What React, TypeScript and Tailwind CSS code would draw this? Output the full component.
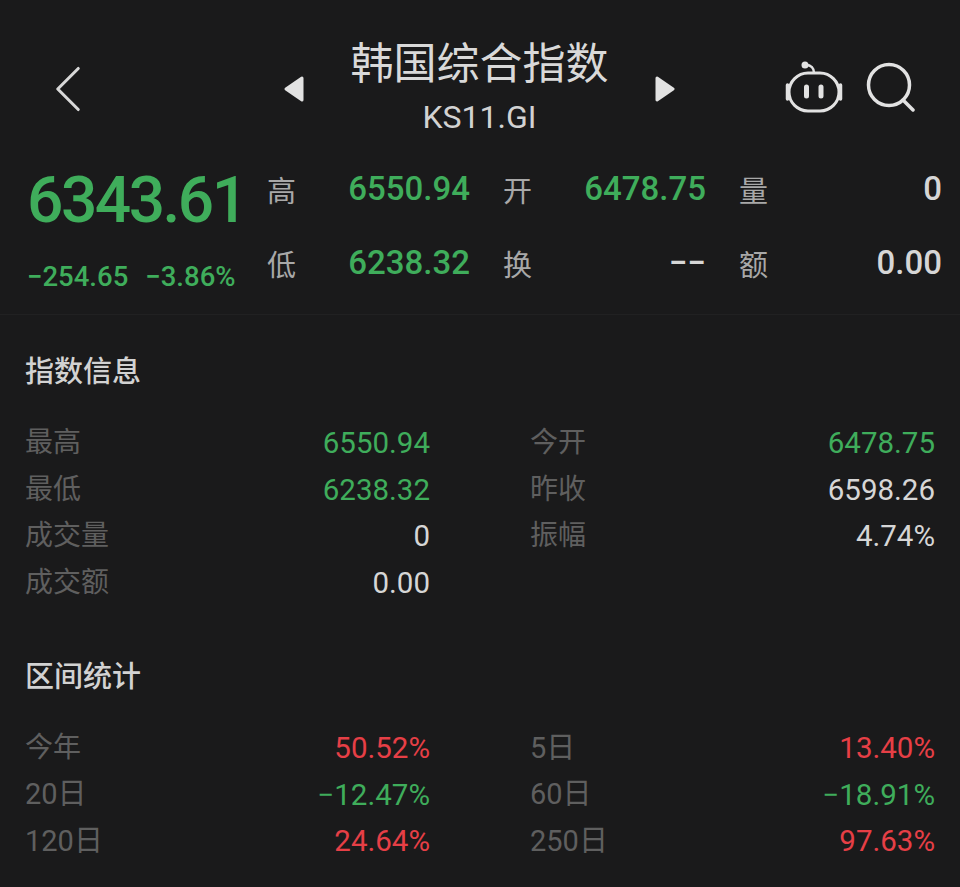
import { ChevronLeft } from "lucide-react";

const GREEN = "text-[#3fad5b]";
const RED = "text-[#e63f46]";
const WHITE = "text-[#d6d6d6]";

const info = [
  ["最高", "6550.94", GREEN],
  ["今开", "6478.75", GREEN],
  ["最低", "6238.32", GREEN],
  ["昨收", "6598.26", WHITE],
  ["成交量", "0", WHITE],
  ["振幅", "4.74%", WHITE],
  ["成交额", "0.00", WHITE],
];

const stats = [
  ["今年", "50.52%", RED],
  ["5日", "13.40%", RED],
  ["20日", "−12.47%", GREEN],
  ["60日", "−18.91%", GREEN],
  ["120日", "24.64%", RED],
  ["250日", "97.63%", RED],
];

function Triangle({ right }: { right?: boolean }) {
  return (
    <svg width="20" height="26" viewBox="0 0 20 26" className={right ? "" : "rotate-180"}>
      <path d="M2 2 L18 13 L2 24 Z" fill="#e2e2e2" stroke="#e2e2e2" strokeWidth="3" strokeLinejoin="round" />
    </svg>
  );
}

function Robot() {
  return (
    <svg width="58" height="52" viewBox="0 0 58 52" fill="none" stroke="#e2e2e2" strokeWidth="3">
      <rect x="4" y="12" width="50" height="38" rx="19" />
      <path d="M21 4 C26 4 29 7 29 12" strokeWidth="2.5" />
      <circle cx="20" cy="4" r="3.5" fill="#e2e2e2" stroke="none" />
      <path d="M2.5 24 V38 M55.5 24 V38" strokeWidth="3.5" strokeLinecap="round" />
      <path d="M21.5 26 V35 M36 26 V35" strokeWidth="5" strokeLinecap="round" />
    </svg>
  );
}

function Search() {
  return (
    <svg width="50" height="50" viewBox="0 0 50 50" fill="none" stroke="#e2e2e2" strokeWidth="3.5">
      <circle cx="23" cy="23" r="20.5" />
      <path d="M37 38 L47 48" strokeLinecap="round" />
    </svg>
  );
}

function Quote({ label, value, color }: { label: string; value: string; color: string }) {
  return (
    <div className="flex items-center justify-between">
      <span className="text-[29px] text-[#a8a8a8]">{label}</span>
      <span className={`pb-[8px] text-[33px] font-medium ${color}`}>{value}</span>
    </div>
  );
}

function Rows({ rows }: { rows: string[][] }) {
  return (
    <div className="grid grid-cols-2 gap-x-[100px] gap-y-[8px]">
      {rows.map(([label, value, color]) => (
        <div key={label} className="flex h-[38.5px] items-center justify-between">
          <span className={`text-[#5f5f5f] ${/\d/.test(label) ? "text-[29px]" : "text-[28px]"}`}>{label}</span>
          <span className={`text-[29.5px] ${color}`}>{value}</span>
        </div>
      ))}
    </div>
  );
}

export default function App() {
  return (
    <div className="h-[887px] w-[960px] overflow-hidden bg-[#1a1a1b] font-['Roboto','Noto_Sans_CJK_SC',sans-serif]">
      <div className="flex h-[145px] items-center pt-[33px]">
        <ChevronLeft size={82} strokeWidth={0.9} color="#d8d8d8" className="ml-[27px] shrink-0" />
        <div className="ml-[175px] shrink-0"><Triangle /></div>
        <div className="flex w-[351px] shrink-0 flex-col items-center">
          <div className="pt-[2px] text-[43px] leading-[54px] text-[#d9d9d9]">韩国综合指数</div>
          <div className="text-[32px] leading-[52px] text-[#d2d2d2]">KS11.GI</div>
        </div>
        <div className="shrink-0"><Triangle right /></div>
        <div className="ml-[110px] mt-[-4px] flex shrink-0 items-center gap-[23px]">
          <Robot />
          <Search />
        </div>
      </div>

      <div className="flex h-[170px] items-start border-b border-[#212122] pt-[8px]">
        <div className="ml-[27px] mt-[11px] w-[240px] shrink-0">
          <div className="text-[64px] font-medium leading-[74px] tracking-[-2.5px] text-[#3fad5b]">6343.61</div>
          <div className="mt-[22px] flex gap-[17px] text-[27.5px] font-medium leading-[34px] text-[#3fad5b]">
            <span>−254.65</span>
            <span>−3.86%</span>
          </div>
        </div>
        <div className="grid grid-cols-[203px_203px_203px] gap-x-[33px] gap-y-[16px] pt-[11px]">
          <Quote label="高" value="6550.94" color={GREEN} />
          <Quote label="开" value="6478.75" color={GREEN} />
          <Quote label="量" value="0" color={WHITE} />
          <Quote label="低" value="6238.32" color={GREEN} />
          <Quote label="换" value="−−" color={WHITE} />
          <Quote label="额" value="0.00" color={WHITE} />
        </div>
      </div>

      <div className="px-[25px]">
        <h2 className="mb-[32px] mt-[37px] text-[29px] font-medium leading-[40px] text-[#d2d2d2]">指数信息</h2>
        <Rows rows={info} />
        <h2 className="mb-[32px] mt-[55px] text-[29px] font-medium leading-[40px] text-[#d2d2d2]">区间统计</h2>
        <Rows rows={stats} />
      </div>
    </div>
  );
}
